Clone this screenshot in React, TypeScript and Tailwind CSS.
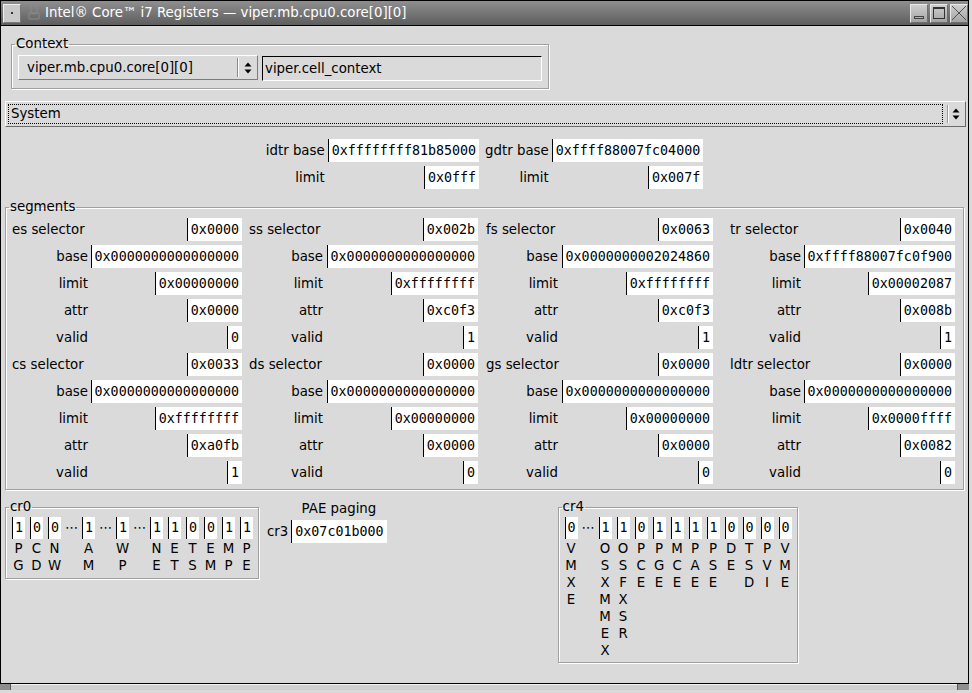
import React from 'react';

type Seg = [string, string, string, string, string, string];

// name, selector, base, limit, attr, valid
const segCols: Seg[][] = [
  [
    ['es', '0x0000', '0x0000000000000000', '0x00000000', '0x0000', '0'],
    ['cs', '0x0033', '0x0000000000000000', '0xffffffff', '0xa0fb', '1'],
  ],
  [
    ['ss', '0x002b', '0x0000000000000000', '0xffffffff', '0xc0f3', '1'],
    ['ds', '0x0000', '0x0000000000000000', '0x00000000', '0x0000', '0'],
  ],
  [
    ['fs', '0x0063', '0x0000000002024860', '0xffffffff', '0xc0f3', '1'],
    ['gs', '0x0000', '0x0000000000000000', '0x00000000', '0x0000', '0'],
  ],
  [
    ['tr', '0x0040', '0xffff88007fc0f900', '0x00002087', '0x008b', '1'],
    ['ldtr', '0x0000', '0x0000000000000000', '0x0000ffff', '0x0082', '0'],
  ],
];
// qt spreads the columns a little unevenly
const colLayout = [
  'ml-0 grid-cols-[76px_150px]',
  'ml-[7px] grid-cols-[74px_151px]',
  'ml-[8px] grid-cols-[72px_151px]',
  'ml-[17px] grid-cols-[71px_150px]',
];

type Bit = { v: string; label: string } | 'gap';

const cr0: Bit[] = [
  { v: '1', label: 'PG' },
  { v: '0', label: 'CD' },
  { v: '0', label: 'NW' },
  'gap',
  { v: '1', label: 'AM' },
  'gap',
  { v: '1', label: 'WP' },
  'gap',
  { v: '1', label: 'NE' },
  { v: '1', label: 'ET' },
  { v: '0', label: 'TS' },
  { v: '0', label: 'EM' },
  { v: '1', label: 'MP' },
  { v: '1', label: 'PE' },
];

const cr4: Bit[] = [
  { v: '0', label: 'VMXE' },
  'gap',
  { v: '1', label: 'OSXMMEX' },
  { v: '1', label: 'OSFXSR' },
  { v: '0', label: 'PCE' },
  { v: '1', label: 'PGE' },
  { v: '1', label: 'MCE' },
  { v: '1', label: 'PAE' },
  { v: '1', label: 'PSE' },
  { v: '0', label: 'DE' },
  { v: '0', label: 'TSD' },
  { v: '0', label: 'PVI' },
  { v: '0', label: 'VME' },
];

function Field({ value }: { value: string }) {
  return (
    <div className="h-[23px] bg-white border-l border-black pl-[3px] pr-[3px] font-['DejaVu_Sans_Mono',monospace] text-[13.33px] leading-[23px] text-black whitespace-nowrap">
      {value}
    </div>
  );
}

function UpDown() {
  return (
    <svg width="8" height="14" viewBox="0 0 8 14">
      <path d="M4 1.5L7.5 5.5H0.5Z M0.5 8.5H7.5L4 12.5Z" fill="black" />
    </svg>
  );
}

function Group({
  title,
  className,
  children,
}: {
  title: string;
  className: string;
  children: React.ReactNode;
}) {
  return (
    <fieldset
      className={`border border-[#a0a0a0] shadow-[inset_1px_1px_0_#ffffff,1px_1px_0_#ffffff] m-0 ${className}`}
    >
      <legend className="-ml-[3px] px-[1px] leading-[16px]">{title}</legend>
      {children}
    </fieldset>
  );
}

function Bits({ bits }: { bits: Bit[] }) {
  return (
    <div className="flex items-start gap-[5px]">
      {bits.map((b, i) =>
        b === 'gap' ? (
          <div key={i} className="w-[11px] h-[22px] flex items-center justify-center text-[13px] leading-[22px]">
            <span className="whitespace-nowrap">⋯</span>
          </div>
        ) : (
          <div key={i} className="w-[13px] flex flex-col items-center">
            <div className="w-[13px] h-[22px] bg-white border-l border-black text-center font-['DejaVu_Sans_Mono',monospace] text-[13.33px] leading-[22px]">
              {b.v}
            </div>
            <div className="mt-[1px] flex flex-col items-center">
              {b.label.split('').map((c, j) => (
                <span key={j} className="leading-[17px]">
                  {c}
                </span>
              ))}
            </div>
          </div>
        )
      )}
    </div>
  );
}

function TitleButton({ children }: { children: React.ReactNode }) {
  return (
    <div className="w-[18px] h-[19px] flex items-center justify-center bg-gradient-to-b from-[#cfcfcf] to-[#a4a4a4] border border-t-[#e8e8e8] border-l-[#e8e8e8] border-b-[#6e6e6e] border-r-[#6e6e6e]">
      {children}
    </div>
  );
}

function TitleBar() {
  return (
    <div className="h-[26px] w-[969px] flex items-center border border-black bg-gradient-to-b from-[#8f8f8f] to-[#5e5e5e] shrink-0">
      <div className="ml-[2px] w-[18px] h-[19px] flex items-center justify-center bg-[#cacaca] border border-t-[#f0f0f0] border-l-[#f0f0f0] border-b-[#7a7a7a] border-r-[#7a7a7a]">
        <div className="w-[2px] h-[2px] bg-[#333333]" />
      </div>
      <svg className="ml-[6px]" width="14" height="18" viewBox="0 0 14 18">
        <path d="M4 2h6v5a3 3 0 0 1-6 0Z M2 9h10v6H2Z" fill="none" stroke="#8a8a8a" strokeWidth="1" />
      </svg>
      <span className="ml-[4px] text-white text-[13.33px] leading-[24px] whitespace-nowrap">
        Intel® Core™ i7 Registers — viper.mb.cpu0.core[0][0]
      </span>
      <div className="ml-auto flex gap-[2px]">
        <TitleButton>
          <svg width="12" height="13" viewBox="0 0 12 13">
            <rect x="1.5" y="9.5" width="9" height="2" fill="none" stroke="#444444" />
          </svg>
        </TitleButton>
        <TitleButton>
          <svg width="14" height="14" viewBox="0 0 14 14">
            <rect x="1.5" y="1.5" width="11" height="11" fill="none" stroke="#333333" />
            <line x1="1.5" y1="2.5" x2="12.5" y2="2.5" stroke="#333333" />
          </svg>
        </TitleButton>
        <TitleButton>
          <svg width="16" height="16" viewBox="0 0 16 16">
            <path d="M1 1L15 15M15 1L1 15" stroke="#505050" strokeWidth="1" />
          </svg>
        </TitleButton>
      </div>
    </div>
  );
}

function RegPair({ name, base, limit }: { name: string; base: string; limit: string }) {
  return (
    <div className="grid grid-cols-[auto_auto] gap-x-[3px] gap-y-[4px] items-center">
      <span className="text-right">{name} base</span>
      <div className="justify-self-end">
        <Field value={base} />
      </div>
      <span className="text-right">limit</span>
      <div className="justify-self-end">
        <Field value={limit} />
      </div>
    </div>
  );
}

function SegColumn({ segs, className }: { segs: Seg[]; className: string }) {
  return (
    <div className={`grid gap-x-[4px] gap-y-[4px] items-center ${className}`}>
      {segs.map((s) => (
        <React.Fragment key={s[0]}>
          <span className="text-left whitespace-nowrap">{s[0]} selector</span>
          <div className="justify-self-end">
            <Field value={s[1]} />
          </div>
          <span className="text-right">base</span>
          <div className="justify-self-end">
            <Field value={s[2]} />
          </div>
          <span className="text-right">limit</span>
          <div className="justify-self-end">
            <Field value={s[3]} />
          </div>
          <span className="text-right">attr</span>
          <div className="justify-self-end">
            <Field value={s[4]} />
          </div>
          <span className="text-right">valid</span>
          <div className="justify-self-end">
            <Field value={s[5]} />
          </div>
        </React.Fragment>
      ))}
    </div>
  );
}

export default function App() {
  return (
    <div className="w-[972px] h-[693px] bg-[#dadada] flex flex-col font-['DejaVu_Sans',sans-serif] text-[13.33px] text-black overflow-hidden">
      <TitleBar />
      <div className="w-[969px] flex-1 flex flex-col border-l border-r border-black">
        {/* context */}
        <Group title="Context" className="mt-[10px] ml-[10px] w-[538px] pl-[6px] pr-[6px] pt-[3px] pb-[7px]">
          <div className="flex items-start gap-[4px]">
            <div className="w-[240px] h-[25px] flex items-center border border-t-white border-l-white border-b-[#7c7c7c] border-r-[#7c7c7c]">
              <span className="flex-1 pl-[8px] leading-[23px] whitespace-nowrap">viper.mb.cpu0.core[0][0]</span>
              <div className="w-px h-[19px] bg-[#8a8a8a] shadow-[1px_0_0_#ffffff]" />
              <div className="w-[19px] flex items-center justify-center">
                <UpDown />
              </div>
            </div>
            <div className="flex-1 h-[25px] mt-[1px] border border-t-black border-l-black border-b-white border-r-white pl-[2px] leading-[23px] whitespace-nowrap">
              viper.cell_context
            </div>
          </div>
        </Group>

        {/* system selector */}
        <div className="mt-[12px] ml-[4px] w-[961px] h-[26px] flex items-stretch border border-t-white border-l-white border-b-[#6a6a6a] border-r-[#6a6a6a] p-[2px]">
          <div className="flex-1 border border-dotted border-black pl-[2px] leading-[18px]">System</div>
          <div className="w-px my-[1px] ml-[4px] bg-[#9a9a9a] shadow-[1px_0_0_#ffffff]" />
          <div className="w-[15px] flex items-center justify-center">
            <UpDown />
          </div>
        </div>

        {/* descriptor tables */}
        <div className="mt-[12px] flex justify-center gap-[6px]">
          <RegPair name="idtr" base="0xffffffff81b85000" limit="0x0fff" />
          <RegPair name="gdtr" base="0xffff88007fc04000" limit="0x007f" />
        </div>

        {/* segments */}
        <Group title="segments" className="mt-[10px] ml-[4px] w-[959px] pl-[6px] pr-[6px] pt-[3px] pb-[5px]">
          <div className="flex">
            {segCols.map((col, i) => (
              <SegColumn key={i} segs={col} className={colLayout[i]} />
            ))}
          </div>
        </Group>

        {/* control registers */}
        <div className="mt-[9px] flex items-start">
          <Group title="cr0" className="ml-[4px] pl-[6px] pr-[5px] pt-[2px] pb-[4px]">
            <Bits bits={cr0} />
          </Group>
          <div className="ml-[8px] mt-[2px] grid grid-cols-[auto_auto] gap-x-[3px] gap-y-[3px] items-center">
            <span />
            <span className="text-center leading-[16px]">PAE paging</span>
            <span>cr3</span>
            <Field value="0x07c01b000" />
          </div>
          <Group title="cr4" className="ml-[171px] pl-[6px] pr-[5px] pt-[2px] pb-[3px]">
            <Bits bits={cr4} />
          </Group>
        </div>
      </div>

      {/* bottom resize bar */}
      <div className="w-[969px] h-[7px] flex border-t border-black bg-[#cfcfcf] shadow-[inset_0_1px_0_#f4f4f4] shrink-0">
        <div className="w-[11px] h-full bg-[#8e8e8e] border-r border-[#5a5a5a]" />
        <div className="flex-1" />
        <div className="w-[12px] h-full bg-[#8e8e8e] border-l border-[#5a5a5a]" />
      </div>
      <div className="h-[3px] shrink-0" />
    </div>
  );
}
